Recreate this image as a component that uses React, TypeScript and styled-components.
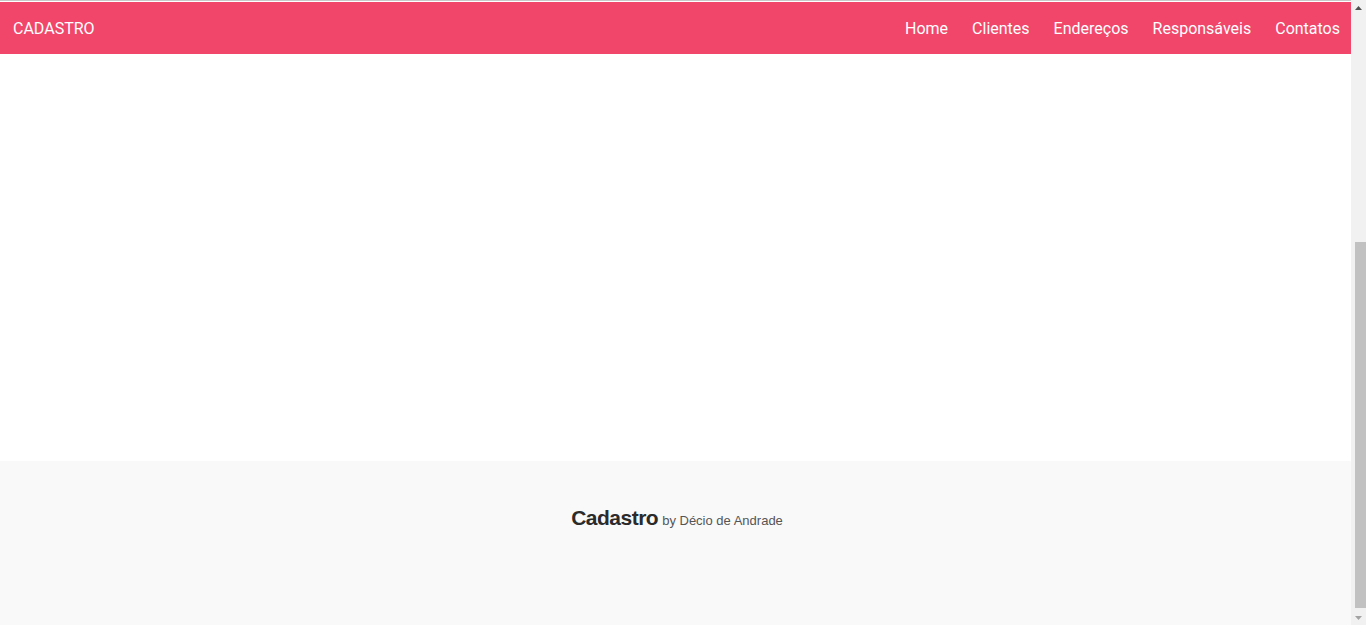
import React from "react";
import styled, { createGlobalStyle } from "styled-components";

const Global = createGlobalStyle`
  html, body { margin: 0; padding: 0; background: #fff; overflow: hidden; }
  body { font-family: Roboto, "Liberation Sans", sans-serif; }
`;

const Frame = styled.div`
  display: flex;
  width: 1366px;
  height: 625px;
`;

const Page = styled.div`
  flex: 1;
  display: flex;
  flex-direction: column;
  border-top: 1px solid #c8c8c8;
  padding-top: 1px;
  background: #fff;
`;

const Header = styled.header`
  height: 52px;
  flex: none;
  background: #f1466a;
  display: flex;
  align-items: center;
  justify-content: space-between;
  padding: 0 11px 0 13px;
`;

const Brand = styled.div`
  color: #fff;
  font-size: 16px;
  line-height: 20px;
  padding-top: 1px;
`;

const Nav = styled.nav`
  display: flex;
  align-items: center;
  gap: 24px;
`;

const NavLink = styled.a`
  color: #fff;
  font-size: 16px;
  line-height: 20px;
  padding-top: 1px;
  text-decoration: none;
`;

const Main = styled.main`
  flex: 1;
  background: #fff;
`;

const Footer = styled.footer`
  height: 164px;
  flex: none;
  background: #f9f9f9;
  display: flex;
  justify-content: center;
  align-items: flex-start;
  padding-top: 45px;
  padding-left: 3px;
  box-sizing: border-box;
  font-family: "Liberation Sans", Arial, sans-serif;
`;

const FooterText = styled.div`
  color: #555;
  font-size: 13px;
  display: flex;
  align-items: baseline;
  gap: 4px;
`;

const Strong = styled.span`
  color: #2b2b2b;
  font-size: 21px;
  font-weight: bold;
  letter-spacing: -0.5px;
`;

const Scrollbar = styled.div`
  width: 15px;
  flex: none;
  background: #f1f1f1;
  display: flex;
  flex-direction: column;
  align-items: center;
`;

const Arrow = styled.div`
  height: 15px;
  width: 15px;
  flex: none;
  display: flex;
  align-items: center;
  justify-content: center;
`;

const Track = styled.div`
  flex: 1;
  width: 100%;
  display: flex;
  flex-direction: column;
  justify-content: flex-end;
  align-items: center;
`;

const Thumb = styled.div`
  width: 11px;
  margin-left: 3px;
  height: 366px;
  background: #c1c1c1;
  margin-bottom: 2px;
`;

export default function App() {
  return (
    <>
      <Global />
      <Frame>
        <Page>
          <Header>
            <Brand>CADASTRO</Brand>
            <Nav>
              <NavLink href="#">Home</NavLink>
              <NavLink href="#">Clientes</NavLink>
              <NavLink href="#">Endereços</NavLink>
              <NavLink href="#">Responsáveis</NavLink>
              <NavLink href="#">Contatos</NavLink>
            </Nav>
          </Header>
          <Main />
          <Footer>
            <FooterText>
              <Strong>Cadastro</Strong>
              <span>by Décio de Andrade</span>
            </FooterText>
          </Footer>
        </Page>
        <Scrollbar>
          <Arrow>
            <svg width="7" height="4" viewBox="0 0 7 4">
              <polygon points="3.5,0 7,4 0,4" fill="#505050" />
            </svg>
          </Arrow>
          <Track>
            <Thumb />
          </Track>
          <Arrow>
            <svg width="7" height="4" viewBox="0 0 7 4">
              <polygon points="0,0 7,0 3.5,4" fill="#a3a3a3" />
            </svg>
          </Arrow>
        </Scrollbar>
      </Frame>
    </>
  );
}
